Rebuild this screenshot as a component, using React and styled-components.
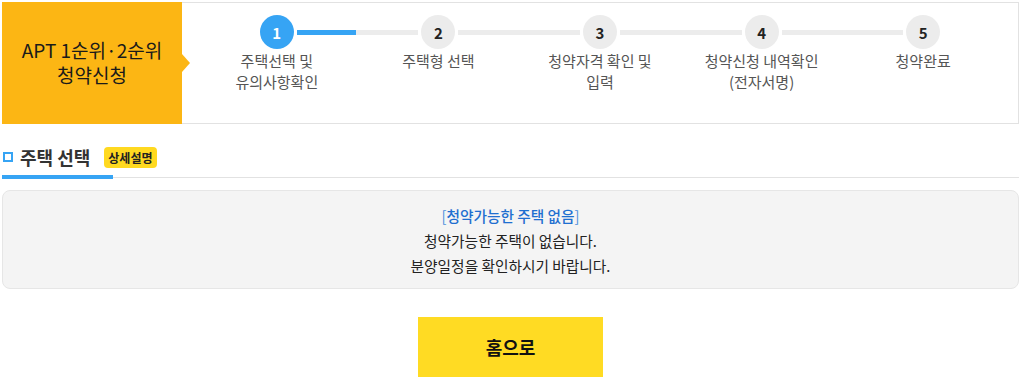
import React from 'react'
import styled, { createGlobalStyle } from 'styled-components'

const GlobalStyle = createGlobalStyle`
  html, body {
    margin: 0;
    padding: 0;
    background: #fff;
  }
  body {
    font-family: "Noto Sans CJK KR", "Noto Sans", sans-serif;
    color: #333;
  }
  * {
    box-sizing: border-box;
  }
`

const Page = styled.div`
  width: 1019px;
  padding: 2px 0 0 2px;
`

const StepHeader = styled.header`
  display: flex;
  height: 122px;
  border: 1px solid #e2e2e2;
  border-left: none;
`

const Title = styled.div`
  position: relative;
  flex: 0 0 180px;
  margin-top: -1px;
  margin-bottom: -1px;
  background: #fcb614;
  display: flex;
  flex-direction: column;
  align-items: center;
  justify-content: center;
  padding-bottom: 2px;
  font-size: 19px;
  line-height: 25px;
  color: #1a1a1a;

  &::after {
    content: '';
    position: absolute;
    top: 52px;
    right: -8px;
    border-top: 9px solid transparent;
    border-bottom: 9px solid transparent;
    border-left: 8px solid #fcb614;
  }
`

const Steps = styled.ol`
  display: flex;
  flex: 1;
  list-style: none;
  margin: 0;
  padding: 12px 14px 0 14px;
`

const Step = styled.li`
  position: relative;
  flex: 1;
  display: flex;
  flex-direction: column;
  align-items: center;

  &:not(:last-child)::after {
    content: '';
    position: absolute;
    top: 15px;
    left: calc(50% + 20px);
    right: calc(-50% + 20px);
    height: 5px;
    background: ${({ $progress }) =>
      $progress
        ? `linear-gradient(to right, #36a4f4 ${$progress}%, #ececec ${$progress}%)`
        : '#ececec'};
  }
`

const Circle = styled.span`
  width: 34px;
  height: 34px;
  border-radius: 50%;
  display: flex;
  align-items: center;
  justify-content: center;
  font-size: 15px;
  font-weight: 700;
  background: ${({ $active }) => ($active ? '#36a4f4' : '#ececec')};
  color: ${({ $active }) => ($active ? '#fff' : '#222')};
`

const StepLabel = styled.span`
  margin-top: 1px;
  font-size: 15px;
  line-height: 21px;
  color: #555;
  text-align: center;
`

const Section = styled.section`
  margin-top: 19px;
`

const SectionHead = styled.div`
  position: relative;
  display: flex;
  align-items: center;
  height: 35px;
  padding-bottom: 6px;
  border-bottom: 1px solid #e2e2e2;

  &::after {
    content: '';
    position: absolute;
    left: 0;
    bottom: -2px;
    width: 111px;
    height: 4px;
    background: #36a4f4;
  }
`

const Square = styled.span`
  width: 10px;
  height: 10px;
  margin-left: 1px;
  border: 2px solid #36a4f4;
`

const SectionTitle = styled.h2`
  margin: 0 0 0 7px;
  font-size: 18px;
  font-weight: 700;
  color: #333;
`

const Badge = styled.span`
  margin-left: 14px;
  padding: 2px 4px;
  border-radius: 4px;
  background: #ffd920;
  font-size: 12px;
  font-weight: 700;
  color: #222;
`

const Notice = styled.div`
  margin-top: 12px;
  padding: 12px 0 10px;
  background: #f4f4f4;
  border: 1px solid #e6e6e6;
  border-radius: 8px;
  text-align: center;
  font-size: 14.7px;
  line-height: 25px;
  color: #222;
`

const NoticeTitle = styled.p`
  margin: 0;
  color: #4b8fdc;

  strong {
    font-weight: 500;
    color: #1f6fd0;
  }
`

const NoticeLine = styled.p`
  margin: 0;
`

const Actions = styled.div`
  display: flex;
  justify-content: center;
  margin-top: 28px;
`

const HomeButton = styled.button`
  width: 185px;
  height: 60px;
  border: none;
  background: #ffdb23;
  font-family: inherit;
  font-size: 18px;
  font-weight: 700;
  color: #111;
  cursor: pointer;
`

const steps = [
  ['주택선택 및', '유의사항확인'],
  ['주택형 선택'],
  ['청약자격 확인 및', '입력'],
  ['청약신청 내역확인', '(전자서명)'],
  ['청약완료'],
]

export default function App() {
  return (
    <Page>
      <GlobalStyle />
      <StepHeader>
        <Title>
          <span>APT 1순위·2순위</span>
          <span>청약신청</span>
        </Title>
        <Steps>
          {steps.map((lines, i) => (
            <Step key={i} $progress={i === 0 ? 49 : 0}>
              <Circle $active={i === 0}>{i + 1}</Circle>
              <StepLabel>
                {lines.map((l, j) => (
                  <React.Fragment key={j}>
                    {j > 0 && <br />}
                    {l}
                  </React.Fragment>
                ))}
              </StepLabel>
            </Step>
          ))}
        </Steps>
      </StepHeader>

      <Section>
        <SectionHead>
          <Square />
          <SectionTitle>주택 선택</SectionTitle>
          <Badge>상세설명</Badge>
        </SectionHead>
        <Notice>
          <NoticeTitle>
            [<strong>청약가능한 주택 없음</strong>]
          </NoticeTitle>
          <NoticeLine>청약가능한 주택이 없습니다.</NoticeLine>
          <NoticeLine>분양일정을 확인하시기 바랍니다.</NoticeLine>
        </Notice>
      </Section>

      <Actions>
        <HomeButton>홈으로</HomeButton>
      </Actions>
    </Page>
  )
}
